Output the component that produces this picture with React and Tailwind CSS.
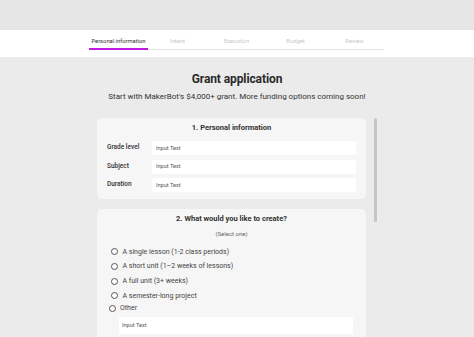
import { useState } from "react";

const tabs = ["Personal information", "Intent", "Execution", "Budget", "Review"];

const fields = ["Grade level", "Subject", "Duration"];

const options = [
  "A single lesson (1-2 class periods)",
  "A short unit (1–2 weeks of lessons)",
  "A full unit (3+ weeks)",
  "A semester-long project",
];

export default function App() {
  const [active] = useState(0);

  return (
    <div className="h-[337px] w-[474px] overflow-hidden bg-[#ebebeb] font-['Roboto',sans-serif] text-[#222]">
      {/* top band */}
      <div className="h-[30px] bg-[#e6e6e6]" />

      {/* stepper tabs */}
      <div className="h-[27px] bg-white pt-[7px]">
        <div className="ml-[89px] flex w-[295px] border-b border-[#e4e4e4]">
          {tabs.map((t, i) => (
            <div
              key={t}
              className={`flex-1 pb-[2px] text-center text-[5.8px] leading-[9px] ${
                i === active ? "border-b-2 border-[#c21be0] -mb-px text-[#333]" : "text-[#c8c8c8]"
              }`}
            >
              {t}
            </div>
          ))}
        </div>
      </div>

      {/* heading */}
      <div className="pt-[13px] text-center">
        <h1 className="text-[12px] font-bold leading-[18px] tracking-[-0.1px] text-[#2a2a2a]">Grant application</h1>
        <p className="mt-[3px] text-[8px] leading-[12px] text-[#333]">
          Start with MakerBot's $4,000+ grant. More funding options coming soon!
        </p>
      </div>

      <div className="mt-[15px] flex">
        <div className="ml-[97px] w-[269px]">
          {/* card 1 */}
          <div className="h-[81px] rounded-[5px] bg-[#f6f6f6] px-[10px] pt-[5px]">
            <h2 className="text-center text-[7.5px] font-bold leading-[10px] text-[#333]">1. Personal information</h2>
            <div className="mt-[8px] flex flex-col gap-[4.5px]">
              {fields.map((f) => (
                <div key={f} className="flex items-center">
                  <span className="w-[45px] text-[6.5px] font-medium text-[#333]">{f}</span>
                  <div className="flex h-[14px] w-[204px] items-center rounded-[2px] bg-white px-[4px] text-[5.6px] text-[#555]">
                    Input Text
                  </div>
                </div>
              ))}
            </div>
          </div>

          {/* card 2 */}
          <div className="mt-[10px] h-[200px] rounded-[5px] bg-[#f6f6f6] px-[10px] pt-[5px]">
            <h2 className="text-center text-[7.5px] font-bold leading-[10px] text-[#333]">2. What would you like to create?</h2>
            <p className="mt-[6px] text-center text-[6px] leading-[8px] text-[#666]">(Select one)</p>
            <div className="mt-[6.7px] flex flex-col">
              {options.map((o) => (
                <label key={o} className="flex h-[14.6px] items-center gap-[4.5px] pl-[4px] text-[7px] text-[#444]">
                  <span className="h-[7px] w-[7px] rounded-full border border-[#555] bg-white" />
                  {o}
                </label>
              ))}
              <label className="-mt-[1px] flex h-[12px] items-center gap-[4.5px] pl-[1.5px] text-[7px] text-[#444]">
                <span className="h-[7px] w-[7px] rounded-full border border-[#555] bg-white" />
                Other
              </label>
              <div className="ml-[12px] mt-[3px] flex h-[17px] w-[234px] items-center bg-white px-[3px] text-[5.6px] text-[#555]">
                Input Text
              </div>
            </div>
          </div>
        </div>

        {/* scrollbar */}
        <div className="ml-[8px] h-[104px] w-[3px] rounded-full bg-[#c6c6c6]" />
      </div>
    </div>
  );
}
